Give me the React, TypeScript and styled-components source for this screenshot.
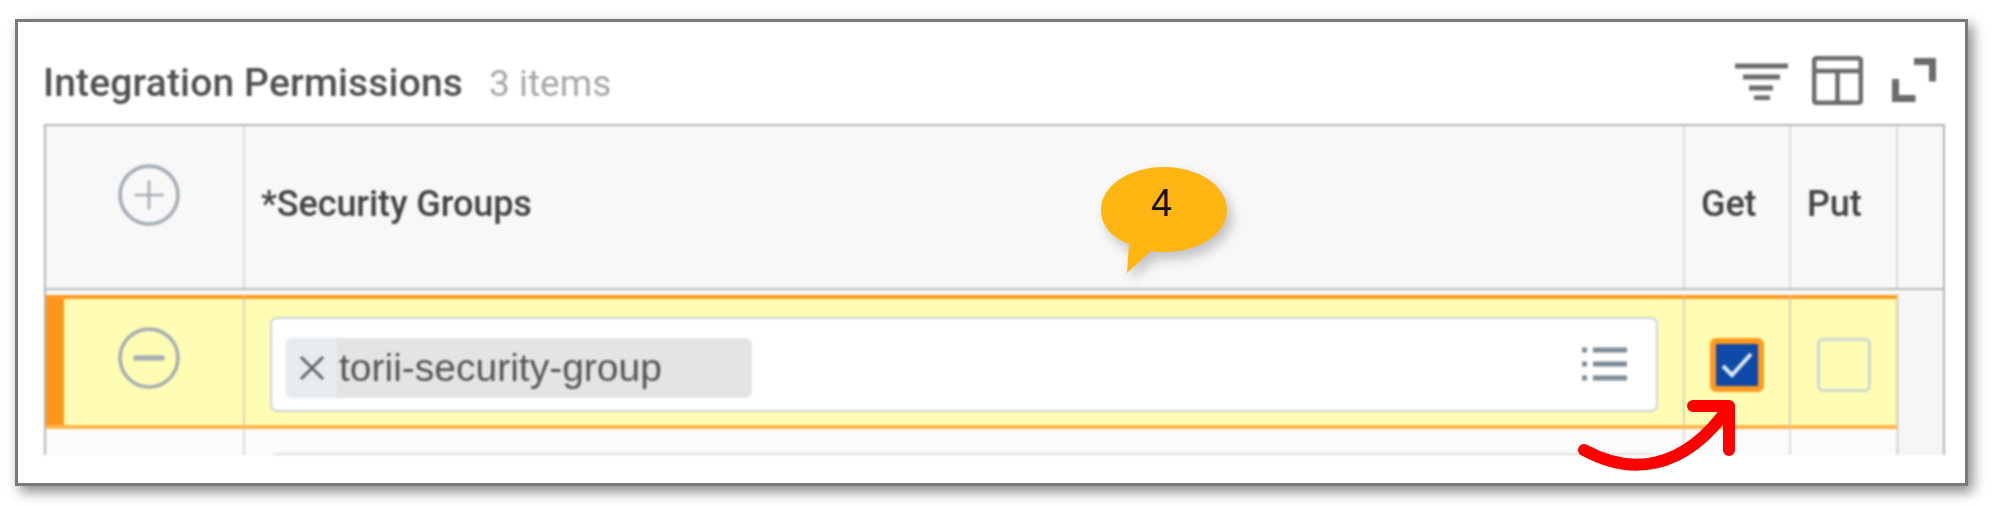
import React from 'react'
import styled, { createGlobalStyle } from 'styled-components';

const COLUMNS = "199px 1440px 106px 107px 49px";

const Global = createGlobalStyle`
    html, body {
        margin: 0;
        padding: 0;
        background: #fff;
    }
`;

const App = () => {
  return (
    <Page>
        <Global />
        <Frame>
            <Content>
                <TitleRow>
                    <Title>Integration Permissions</Title>
                    <Count>3 items</Count>
                    <Tools>
                        <ToolIcon $gap={0} width="53" height="40" viewBox="0 0 53 40" fill="none" stroke="#6b6b6b" strokeWidth="5">
                            <path d="M0 6h53M8 17h37M14 28h24M19 38h16" />
                        </ToolIcon>
                        <ToolIcon $gap={24} width="51" height="49" viewBox="0 0 51 49" fill="none" stroke="#6b6b6b" strokeWidth="4.500">
                            <rect x="2.200" y="2.200" width="46.600" height="44.600" rx="2" />
                            <path d="M2 15h47M25.500 15v32" />
                        </ToolIcon>
                        <ToolIcon $gap={29} width="44" height="44" viewBox="0 0 44 44" fill="none" stroke="#6b6b6b" strokeWidth="7">
                            <path d="M22 3.500h18.500v20M3.500 21v19.500h20" />
                        </ToolIcon>
                    </Tools>
                </TitleRow>
                <Table>
                    <HeaderRow>
                        <Cell $center>
                            <RoundButton viewBox="0 0 60 60" $lift={-12}>
                                <circle cx="30" cy="30" r="28" />
                                <path d="M30 16v28M16 30h28" strokeWidth="2.500" />
                            </RoundButton>
                        </Cell>
                        <Cell><ColumnLabel $pad={16}>*Security Groups</ColumnLabel></Cell>
                        <Cell><ColumnLabel $pad={16}>Get</ColumnLabel></Cell>
                        <Cell><ColumnLabel $pad={16}>Put</ColumnLabel></Cell>
                        <Cell />
                    </HeaderRow>
                    <ActiveRow>
                        <ActiveHandleCell>
                            <RoundButton viewBox="0 0 60 60" $lift={-4}>
                                <circle cx="30" cy="30" r="28" />
                                <path d="M15 30h30" strokeWidth="5" />
                            </RoundButton>
                        </ActiveHandleCell>
                        <ActiveCell>
                            <Input>
                                <Chip>
                                    <ChipClose>
                                        <svg width="26" height="26" viewBox="0 0 26 26" fill="none" stroke="#666" strokeWidth="3">
                                            <path d="M2 2l22 22M24 2L2 24" />
                                        </svg>
                                    </ChipClose>
                                    <ChipText>torii-security-group</ChipText>
                                </Chip>
                                <ListIcon width="45" height="36" viewBox="0 0 45 36" fill="none" stroke="#7b8a96" strokeWidth="5">
                                    <path d="M11 5h34M11 19h34M11 33h34" />
                                    <path d="M0 5h7M0 19h7M0 33h7" strokeDasharray="5 2" />
                                </ListIcon>
                            </Input>
                        </ActiveCell>
                        <ActiveCell $center>
                            <CheckBox $checked>
                                <svg width="32" height="26" viewBox="0 0 32 26" fill="none" stroke="#dfe8f5" strokeWidth="4">
                                    <path d="M2 14l9 9L30 2" />
                                </svg>
                            </CheckBox>
                        </ActiveCell>
                        <ActiveCell $center><CheckBox /></ActiveCell>
                        <BlankCell />
                    </ActiveRow>
                    <NextRow>
                        <Cell />
                        <Cell><NextInput /></Cell>
                        <Cell />
                        <Cell />
                        <BlankCell />
                    </NextRow>
                </Table>
            </Content>
            <Bubble viewBox="0 0 130 110" fill="none">
                <path d="M65 0C100 0 128 19 128 43C128 67 100 85 65 85C60 85 56 85 52 84L28 106L30 77C11 70 2 57 2 43C2 19 30 0 65 0Z" fill="#ffb612" />
            </Bubble>
            <BubbleText>4</BubbleText>
            <Arrow viewBox="0 0 165 75" fill="none" stroke="#ff0000" strokeWidth="12" strokeLinecap="round" strokeLinejoin="round">
                <path d="M6 50C50 74 104 74 151 7" />
                <path d="M115 6H151V50" />
            </Arrow>
        </Frame>
    </Page>
  )
}

export default App;

const Page = styled.div`
    width: 2000px;
    height: 506px;
    padding: 19px 0 0 15px;
    box-sizing: border-box;
    overflow: hidden;
    background: #fff;
`;
const Frame = styled.div`
    position: relative;
    width: 1953px;
    height: 467px;
    box-sizing: border-box;
    border: 3px solid #7a7a7a;
    background: #fff;
    box-shadow: 5px 6px 12px rgba(0, 0, 0, 0.45);
`;
const Content = styled.div`
    padding-left: 26px;
    filter: blur(1px);
`;
const TitleRow = styled.div`
    display: flex;
    align-items: center;
    width: 1901px;
    height: 102px;
    box-sizing: border-box;
    padding: 20px 9px 0 0;
`;
const Title = styled.span`
    margin-left: -1px;
    font-family: Roboto, sans-serif;
    font-weight: 500;
    font-size: 39px;
    letter-spacing: 0.15px;
    color: #505050;
`;
const Count = styled.span`
    margin-left: 26px;
    font-family: Roboto, sans-serif;
    font-size: 37px;
    color: #a6a6a6;
`;
const Tools = styled.div`
    margin-left: auto;
    display: flex;
    align-items: center;
    transform: translateY(-3px);
`;
const ToolIcon = styled.svg<{ $gap: number }>`
    margin-left: ${(props) => props.$gap}px;
`;
const ListIcon = styled.svg`
    transform: translate(2px, -2px);
`;
const Table = styled.div`
    width: 1901px;
    height: 331px;
    box-sizing: border-box;
    border-top: 2px solid #b5b5b5;
    border-left: 2px solid #b5b5b5;
    border-right: 2px solid #b5b5b5;
    background: #f8f8f8;
    overflow: hidden;
`;
const Row = styled.div`
    display: grid;
    grid-template-columns: ${COLUMNS};
`;
const HeaderRow = styled(Row)`
    height: 164px;
    box-sizing: border-box;
    border-bottom: 2px solid #b8b8b8;
`;
const ActiveRow = styled(Row)`
    height: 134px;
    margin-top: 5px;
`;
const NextRow = styled(Row)`
    height: 28px;
    background: #fbfbfb;
`;
const Cell = styled.div<{ $center?: boolean }>`
    display: flex;
    align-items: center;
    justify-content: ${(props) => (props.$center ? "center" : "flex-start")};
    box-sizing: border-box;
    border-right: 2px solid #dcdcdc;
`;
const ActiveCell = styled(Cell)`
    background: #fffdb4;
    border-top: 4px solid #ff9a1f;
    border-bottom: 4px solid #ffb54a;
    border-right-color: #d5d5b0;
`;
const ActiveHandleCell = styled(ActiveCell)`
    justify-content: center;
    position: relative;
    &::before {
        content: "";
        position: absolute;
        left: 0;
        top: 0;
        bottom: 0;
        width: 18px;
        background: #ff951c;
    }
`;
const BlankCell = styled.div`
    background: #f6f6f6;
    border-left: 1px solid #e2e2e2;
`;
const RoundButton = styled.svg<{ $lift: number }>`
    width: 62px;
    height: 62px;
    fill: none;
    stroke: #a4aeb3;
    stroke-width: 3.5;
    transform: translateX(4px) translateY(${(props) => props.$lift}px);
`;
const ColumnLabel = styled.span<{ $pad: number }>`
    padding-left: ${(props) => props.$pad}px;
    font-family: Roboto, sans-serif;
    font-weight: 500;
    font-size: 36px;
    letter-spacing: -0.1px;
    color: #444;
    transform: translateY(-3px);
`;
const Input = styled.div`
    display: flex;
    align-items: center;
    justify-content: space-between;
    width: 1388px;
    height: 95px;
    margin: 5px 0 0 25px;
    padding: 0 31px 0 14px;
    box-sizing: border-box;
    background: #fff;
    border: 2px solid #c9d3d8;
    border-radius: 7px;
`;
const NextInput = styled.div`
    width: 1388px;
    height: 40px;
    margin: 24px 0 0 25px;
    align-self: flex-start;
    box-sizing: border-box;
    background: #fff;
    border: 2px solid #d8dcdf;
    border-radius: 7px;
`;
const Chip = styled.div`
    display: flex;
    align-items: center;
    width: 466px;
    height: 60px;
    margin-top: 6px;
    border-radius: 6px;
    overflow: hidden;
    background: #e4e4e4;
`;
const ChipClose = styled.div`
    display: flex;
    align-items: center;
    justify-content: center;
    width: 51px;
    height: 100%;
    background: #e6ebee;
`;
const ChipText = styled.span`
    padding-left: 2px;
    font-family: "Liberation Sans", sans-serif;
    font-size: 39px;
    color: #555;
`;
const CheckBox = styled.div<{ $checked?: boolean }>`
    display: flex;
    align-items: center;
    justify-content: center;
    width: 54px;
    height: 54px;
    margin-top: 5px;
    box-sizing: border-box;
    border-radius: 6px;
    background: ${(props) => (props.$checked ? "#0f4aa8" : "transparent")};
    border: ${(props) => (props.$checked ? "6px solid #ff9a1f" : "3px solid #ced8d0")};
`;
const Bubble = styled.svg`
    position: absolute;
    left: 1081px;
    top: 145px;
    width: 130px;
    height: 110px;
    filter: drop-shadow(5px 7px 6px rgba(0, 0, 0, 0.22));
`;
const BubbleText = styled.span`
    position: absolute;
    left: 1133px;
    top: 159px;
    font-family: "Liberation Sans", sans-serif;
    font-size: 38px;
    line-height: 44px;
    color: #111;
`;
const Arrow = styled.svg`
    position: absolute;
    left: 1560px;
    top: 378px;
    width: 165px;
    height: 75px;
    filter: blur(0.6px);
`;
